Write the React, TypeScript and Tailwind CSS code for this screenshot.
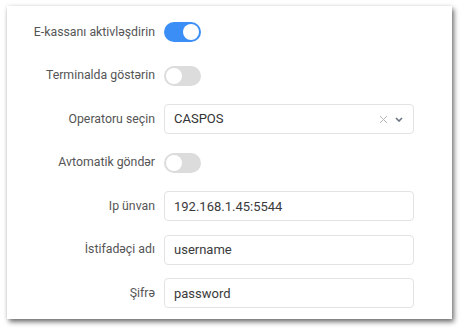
import { useState } from "react";

type Row =
  | { kind: "toggle"; label: string; on: boolean }
  | { kind: "select"; label: string; value: string }
  | { kind: "input"; label: string; value: string };

const ROWS: Row[] = [
  { kind: "toggle", label: "E-kassanı aktivləşdirin", on: true },
  { kind: "toggle", label: "Terminalda göstərin", on: false },
  { kind: "select", label: "Operatoru seçin", value: "CASPOS" },
  { kind: "toggle", label: "Avtomatik göndər", on: false },
  { kind: "input", label: "Ip ünvan", value: "192.168.1.45:5544" },
  { kind: "input", label: "İstifadəçi adı", value: "username" },
  { kind: "input", label: "Şifrə", value: "password" },
];

function Toggle({ initial }: { initial: boolean }) {
  const [on, setOn] = useState(initial);
  return (
    <button
      type="button"
      onClick={() => setOn(!on)}
      className={`flex h-[20px] w-[37px] items-center rounded-full px-[2px] ${
        on ? "justify-end bg-[#3a8ef6]" : "justify-start bg-[#dcdcdc]"
      }`}
    >
      <span className="h-[16px] w-[16px] rounded-full bg-white" />
    </button>
  );
}

function Control({ row }: { row: Row }) {
  if (row.kind === "toggle") return <Toggle initial={row.on} />;
  if (row.kind === "select") {
    return (
      <div className="flex h-[30px] w-[250px] items-center rounded-[4px] border border-[#e3e3e3] bg-white pl-[9px] pr-[10px] text-[13px] text-[#333]">
        <span className="flex-1">{row.value}</span>
        <svg width="9" height="9" viewBox="0 0 9 9" className="mr-[7px]">
          <path d="M1 1L8 8M8 1L1 8" stroke="#b5b5b5" strokeWidth="1" />
        </svg>
        <svg width="8" height="5" viewBox="0 0 8 5">
          <path d="M1 1L4 4L7 1" fill="none" stroke="#6b7280" strokeWidth="1.6" />
        </svg>
      </div>
    );
  }
  return (
    <input
      defaultValue={row.value}
      className="h-[30px] w-[250px] rounded-[4px] border border-[#e3e3e3] bg-white px-[9px] text-[13px] text-[#3a3a3a] outline-none"
    />
  );
}

export default function App() {
  return (
    <div className="h-[333px] w-[464px] bg-white pl-[7px] pt-[6px] font-['Roboto',sans-serif]">
      <div className="flex h-[313px] w-[445px] flex-col gap-[13.5px] bg-white pb-[11px] pl-[16px] pt-[11px] shadow-[2px_3px_5px_rgba(0,0,0,0.55),0_0_4px_rgba(0,0,0,0.08)]">
        {ROWS.map((row) => (
          <div key={row.label} className="flex h-[30px] items-center">
            <div className="w-[132px] text-right text-[12.3px] text-[#555]">{row.label}</div>
            <div className="ml-[9px]">
              <Control row={row} />
            </div>
          </div>
        ))}
      </div>
    </div>
  );
}
